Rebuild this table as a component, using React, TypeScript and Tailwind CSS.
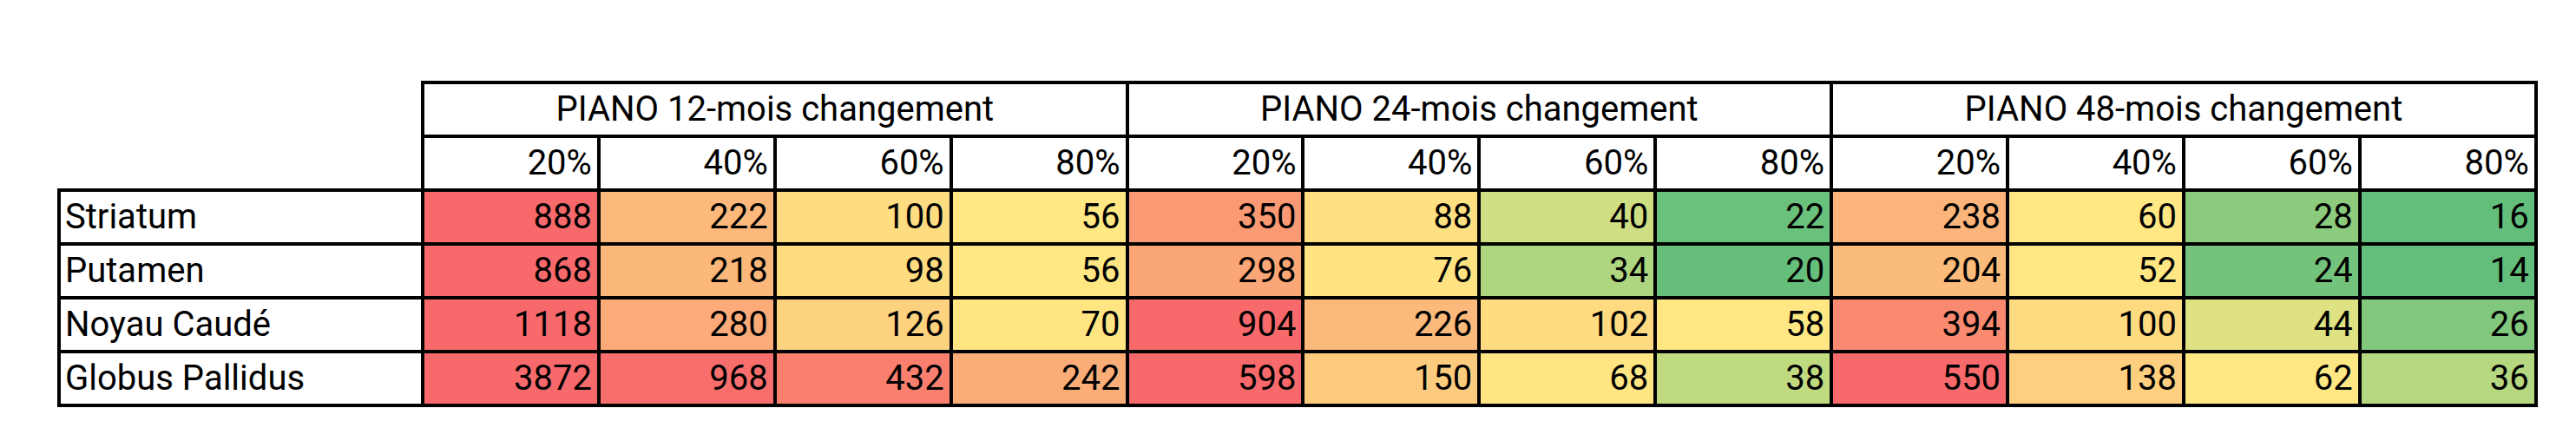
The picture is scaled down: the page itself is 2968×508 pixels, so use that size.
type Cell = { v: number; bg: string };

const groups = ["PIANO 12-mois changement", "PIANO 24-mois changement", "PIANO 48-mois changement"];
const pcts = ["20%", "40%", "60%", "80%"];

const rows: { label: string; cells: Cell[] }[] = [
  {
    label: "Striatum",
    cells: [
      { v: 888, bg: "bg-[#F8696B]" },
      { v: 222, bg: "bg-[#FCB97B]" },
      { v: 100, bg: "bg-[#FEDC81]" },
      { v: 56, bg: "bg-[#FFE884]" },
      { v: 350, bg: "bg-[#FA9A74]" },
      { v: 88, bg: "bg-[#FEE082]" },
      { v: 40, bg: "bg-[#CEDE82]" },
      { v: 22, bg: "bg-[#6AC17C]" },
      { v: 238, bg: "bg-[#FBB57A]" },
      { v: 60, bg: "bg-[#FFE784]" },
      { v: 28, bg: "bg-[#8CCA7E]" },
      { v: 16, bg: "bg-[#63BE7B]" },
    ],
  },
  {
    label: "Putamen",
    cells: [
      { v: 868, bg: "bg-[#F8696B]" },
      { v: 218, bg: "bg-[#FCB77A]" },
      { v: 98, bg: "bg-[#FEDD81]" },
      { v: 56, bg: "bg-[#FFE884]" },
      { v: 298, bg: "bg-[#FBA676]" },
      { v: 76, bg: "bg-[#FFE383]" },
      { v: 34, bg: "bg-[#AED57F]" },
      { v: 20, bg: "bg-[#65BF7B]" },
      { v: 204, bg: "bg-[#FBBC7B]" },
      { v: 52, bg: "bg-[#FFE884]" },
      { v: 24, bg: "bg-[#74C37C]" },
      { v: 14, bg: "bg-[#63BE7B]" },
    ],
  },
  {
    label: "Noyau Caudé",
    cells: [
      { v: 1118, bg: "bg-[#F8696B]" },
      { v: 280, bg: "bg-[#FBAA78]" },
      { v: 126, bg: "bg-[#FDD27F]" },
      { v: 70, bg: "bg-[#FFE683]" },
      { v: 904, bg: "bg-[#F8696B]" },
      { v: 226, bg: "bg-[#FBB97B]" },
      { v: 102, bg: "bg-[#FEDB81]" },
      { v: 58, bg: "bg-[#FFE784]" },
      { v: 394, bg: "bg-[#F98A70]" },
      { v: 100, bg: "bg-[#FEDA81]" },
      { v: 44, bg: "bg-[#DEE282]" },
      { v: 26, bg: "bg-[#81C77D]" },
    ],
  },
  {
    label: "Globus Pallidus",
    cells: [
      { v: 3872, bg: "bg-[#F8696B]" },
      { v: 968, bg: "bg-[#F86E6C]" },
      { v: 432, bg: "bg-[#F97F6F]" },
      { v: 242, bg: "bg-[#FBAD78]" },
      { v: 598, bg: "bg-[#F8696B]" },
      { v: 150, bg: "bg-[#FDCB7E]" },
      { v: 68, bg: "bg-[#FFE683]" },
      { v: 38, bg: "bg-[#C0DA80]" },
      { v: 550, bg: "bg-[#F8696B]" },
      { v: 138, bg: "bg-[#FDCF7F]" },
      { v: 62, bg: "bg-[#FFE784]" },
      { v: 36, bg: "bg-[#B5D77F]" },
    ],
  },
];

export default function App() {
  return (
    <div className="h-[508px] overflow-hidden bg-white pl-[66px] pt-[93px] font-[Roboto,sans-serif] text-[40px] leading-none text-black">
      <table className="w-[2854px] table-fixed border-collapse">
        <colgroup>
          <col className="w-[419px]" />
          {Array.from({ length: 12 }).map((_, i) => (
            <col key={i} className="w-[202.9px]" />
          ))}
        </colgroup>
        <thead>
          <tr className="h-[62px]">
            <th className="p-0" />
            {groups.map((g) => (
              <th key={g} colSpan={4} className="border-4 border-black p-0 text-center font-normal">
                {g}
              </th>
            ))}
          </tr>
          <tr className="h-[62px]">
            <th className="p-0" />
            {groups.flatMap((g) =>
              pcts.map((p) => (
                <th key={g + p} className="border-4 border-black p-0 pr-[6px] text-right font-normal">
                  {p}
                </th>
              )),
            )}
          </tr>
        </thead>
        <tbody>
          {rows.map((row) => (
            <tr key={row.label} className="h-[62px]">
              <td className="border-4 border-black p-0 pl-[5px] text-left">{row.label}</td>
              {row.cells.map((c, i) => (
                <td key={i} className={`border-4 border-black p-0 pr-[6px] text-right ${c.bg}`}>
                  {c.v}
                </td>
              ))}
            </tr>
          ))}
        </tbody>
      </table>
    </div>
  );
}
